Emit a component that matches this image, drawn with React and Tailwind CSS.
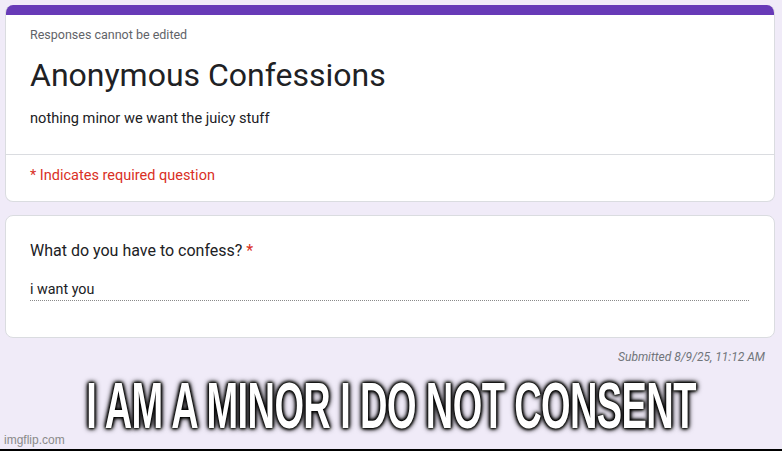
export default function App() {
  return (
    <div className="relative w-[782px] h-[451px] bg-[#f0ebf8] flex flex-col overflow-hidden font-['Roboto',sans-serif]">
      <div className="flex flex-col pl-[5px] pr-[7px] pt-[5px]">
        {/* Header card */}
        <div className="flex flex-col rounded-lg bg-white border border-[#dadce0] border-t-0 overflow-hidden">
          <div className="h-[10px] bg-[#673ab7]" />
          <div className="flex flex-col px-6 pt-3 pb-[26px] border-b border-[#dadce0]">
            <div className="text-[12.5px] leading-4 text-[#5f6368]">Responses cannot be edited</div>
            <div className="mt-3 text-[32px] leading-10 text-[#202124]">Anonymous Confessions</div>
            <div className="mt-[13px] text-[14.6px] leading-5 text-[#202124]">nothing minor we want the juicy stuff</div>
          </div>
          <div className="px-6 pt-[11px] pb-[15px] text-[14.5px] leading-5 text-[#d93025]">* Indicates required question</div>
        </div>
        {/* Question card */}
        <div className="mt-[13px] flex flex-col rounded-lg bg-white border border-[#dadce0] px-6 pt-[23px] pb-[36px]">
          <div className="text-[16px] leading-6 text-[#202124]">
            What do you have to confess? <span className="text-[#d93025]">*</span>
          </div>
          <div className="mt-[15px] mr-[1px] h-[23px] border-b border-dotted border-[#8a8a8a] text-[14.3px] leading-5 text-[#202124] pt-[1px]">
            i want you
          </div>
        </div>
        <div className="mt-[11px] pr-[10px] text-right text-[12px] leading-4 italic text-[#70757a]">
          Submitted 8/9/25, 11:12 AM
        </div>
      </div>
      <div className="flex-1" />
      <div className="h-[2px] bg-black" />

      {/* Meme caption overlay */}
      <div className="absolute left-0 right-0 top-[386px] flex justify-center">
        <div className="whitespace-nowrap font-['Liberation_Sans',sans-serif] font-bold text-[38px] leading-[40px] text-white tracking-[-0.6px] [-webkit-text-stroke:2px_#fff] [paint-order:stroke_fill] [text-shadow:0_0_2px_#000,0_0_2px_#000,0_0_3px_#000,0_0_4px_#000,0_0_5px_#000] scale-y-[1.72]">
          I AM A MINOR I DO NOT CONSENT
        </div>
      </div>
      {/* Watermark */}
      <div className="absolute left-[4px] bottom-[4px] font-['Liberation_Sans',sans-serif] text-[12px] leading-[14px] text-[#8a8a8a]">
        imgflip.com
      </div>
    </div>
  );
}
